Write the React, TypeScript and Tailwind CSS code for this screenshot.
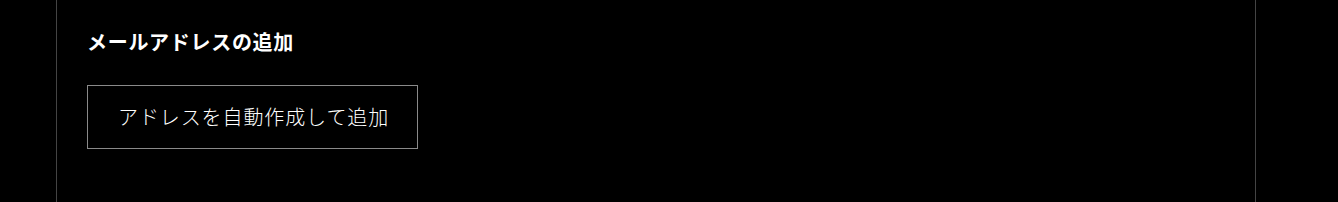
export default function App() {
  return (
    <div
      className="h-[202px] w-[1338px] bg-black text-white"
      style={{ fontFamily: '"Noto Sans CJK JP", "Noto Sans", sans-serif' }}
    >
      <div className="ml-[56px] h-full w-[1200px] border-x border-[#444] pl-[30px] pt-[27px]">
        <h2 className="text-[20px] font-bold leading-[30px] tracking-[0.7px]">メールアドレスの追加</h2>
        <button
          type="button"
          className="mt-[28px] flex h-[64px] items-center border border-[#8a8a8a] pl-[30px] pr-[28px] text-[20px] font-light leading-none tracking-[0.9px] text-white"
        >
          アドレスを自動作成して追加
        </button>
      </div>
    </div>
  );
}
